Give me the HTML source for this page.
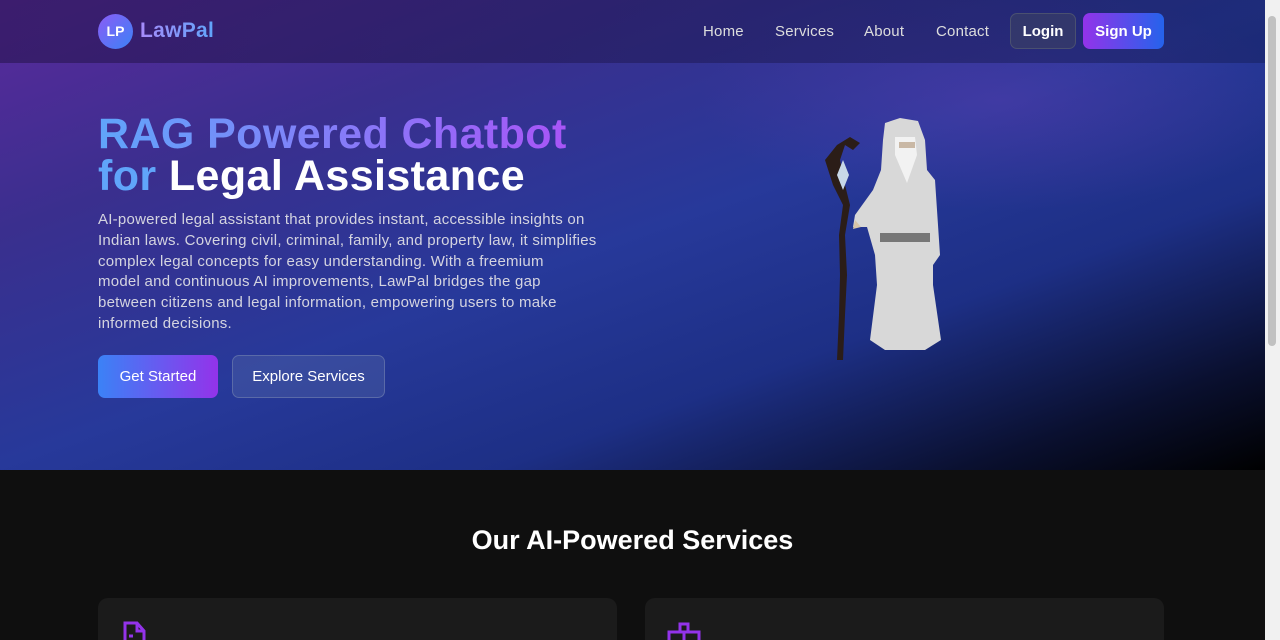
<!DOCTYPE html>
<html><head><style>
*{margin:0;padding:0;box-sizing:border-box}
html,body{width:1280px;height:640px;overflow:hidden}
body{background:#0f0f0f;font-family:"Liberation Sans",sans-serif;position:relative}
.hero{position:absolute;left:0;top:0;width:1265px;height:470px;background:linear-gradient(160deg,#5a2a9c 0%,#3a2f8e 25%,#27399a 50%,#1d2f85 70%,#0a1030 88%,#000 100%)}
.glow{position:absolute;left:0;top:0;width:1265px;height:470px;background:radial-gradient(ellipse at 1000px 100px,rgba(110,60,180,.35),transparent 300px)}
.nav{position:absolute;left:0;top:0;width:1265px;height:63px;background:linear-gradient(90deg,rgba(40,20,80,.6),rgba(20,30,90,.5))}
.logo{position:absolute;left:98px;top:14px;width:35px;height:35px;border-radius:50%;background:linear-gradient(135deg,#8b5cf6,#3b82f6);color:#fff;font-weight:bold;font-size:14px;line-height:35px;text-align:center}
.brand{position:absolute;left:140px;top:19px;font-size:21px;font-weight:bold;background:linear-gradient(90deg,#a78bfa,#60a5fa);-webkit-background-clip:text;color:transparent;letter-spacing:.3px}
.nl{position:absolute;top:23px;color:#ddd;font-size:15px;letter-spacing:.2px}
.btn{position:absolute;border-radius:7px;color:#fff;font-size:15px;text-align:center;display:flex;align-items:center;justify-content:center}
h1{position:absolute;left:98px;top:113px;font-size:43px;line-height:42px;font-weight:bold;color:#fff;letter-spacing:.4px}
.g{background:linear-gradient(90deg,#60a5fa,#a855f7);-webkit-background-clip:text;color:transparent}
p{position:absolute;left:98px;top:210px;width:540px;font-size:15px;line-height:20.8px;color:#d4d4e0;letter-spacing:.25px;white-space:nowrap}
.scroll{position:absolute;left:1265px;top:0;width:15px;height:640px;background:#f1f1f1}
.thumb{position:absolute;left:1268px;top:16px;width:8px;height:330px;background:#c1c1c1;border-radius:4px}
.card{position:absolute;top:598px;width:519px;height:42px;background:#1b1b1b;border-radius:10px 10px 0 0;overflow:hidden}
</style></head><body>
<div class="hero"></div><div class="glow"></div>
<div class="nav"></div>
<div class="logo">LP</div><div class="brand">LawPal</div>
<div class="nl" style="left:703px">Home</div>
<div class="nl" style="left:775px">Services</div>
<div class="nl" style="left:864px">About</div>
<div class="nl" style="left:936px">Contact</div>
<div class="btn" style="left:1010px;top:13px;width:66px;height:36px;border:1px solid #4a5070;background:rgba(60,65,100,.6);font-weight:bold">Login</div>
<div class="btn" style="left:1083px;top:13px;width:81px;height:36px;background:linear-gradient(90deg,#9333ea,#2563eb);font-weight:bold">Sign Up</div>
<h1><span class="g">RAG Powered Chatbot</span><br><span style="color:#60a5fa">for</span> Legal Assistance</h1>
<p>AI-powered legal assistant that provides instant, accessible insights on<br>Indian laws. Covering civil, criminal, family, and property law, it simplifies<br>complex legal concepts for easy understanding. With a freemium<br>model and continuous AI improvements, LawPal bridges the gap<br>between citizens and legal information, empowering users to make<br>informed decisions.</p>
<div class="btn" style="left:98px;top:355px;width:120px;height:43px;background:linear-gradient(90deg,#3b82f6,#9333ea)">Get Started</div>
<div class="btn" style="left:232px;top:355px;width:153px;height:43px;border:1px solid #5a6aa8;background:rgba(90,110,170,.35)">Explore Services</div>
<svg style="position:absolute;left:815px;top:115px" width="140" height="250" viewBox="0 0 140 250">
<path d="M22 30 L35 22 L45 28 L38 35 L30 30 L25 45 L30 70 L35 90 L30 120 L32 160 L30 200 L28 245 L22 245 L24 200 L25 160 L24 120 L28 90 L18 70 L10 45 Z" fill="#2b1d18"/>
<path d="M28 45 L34 60 L28 75 L22 60 Z" fill="#c8d8e8"/>
<path d="M70 8 L85 3 L103 6 L110 25 L112 55 L120 65 L125 140 L118 150 L118 170 L126 225 L110 235 L70 235 L55 225 L62 170 L60 140 L52 112 L38 112 L40 100 L58 75 L66 55 L68 25 Z" fill="#d8d8d8"/>
<rect x="65" y="118" width="50" height="9" fill="#777"/>
<path d="M80 22 L100 22 L102 40 L92 68 L80 40 Z" fill="#f2f2f2"/>
<rect x="84" y="27" width="16" height="6" fill="#c9b8a5"/>
<path d="M40 105 L46 112 L38 114 Z" fill="#d8c4a8"/>
</svg>
<div style="position:absolute;left:0;top:525px;width:1265px;text-align:center;color:#fff;font-size:27px;font-weight:bold">Our AI-Powered Services</div>
<div class="card" style="left:98px"><svg style="position:absolute;left:25px;top:22px" width="34" height="30"><path d="M2 20V3h12l7 8v19M14 3v8h7M6 16h4" stroke="#9333ea" stroke-width="3" fill="none"/></svg></div>
<div class="card" style="left:645px"><svg style="position:absolute;left:20px;top:22px" width="40" height="30"><path d="M4 20v-8h30v18M4 12v18M15 12V4h8v8M19 12v18" stroke="#9333ea" stroke-width="3" fill="none"/></svg></div>
<div class="scroll"></div><div class="thumb"></div>
</body></html>
